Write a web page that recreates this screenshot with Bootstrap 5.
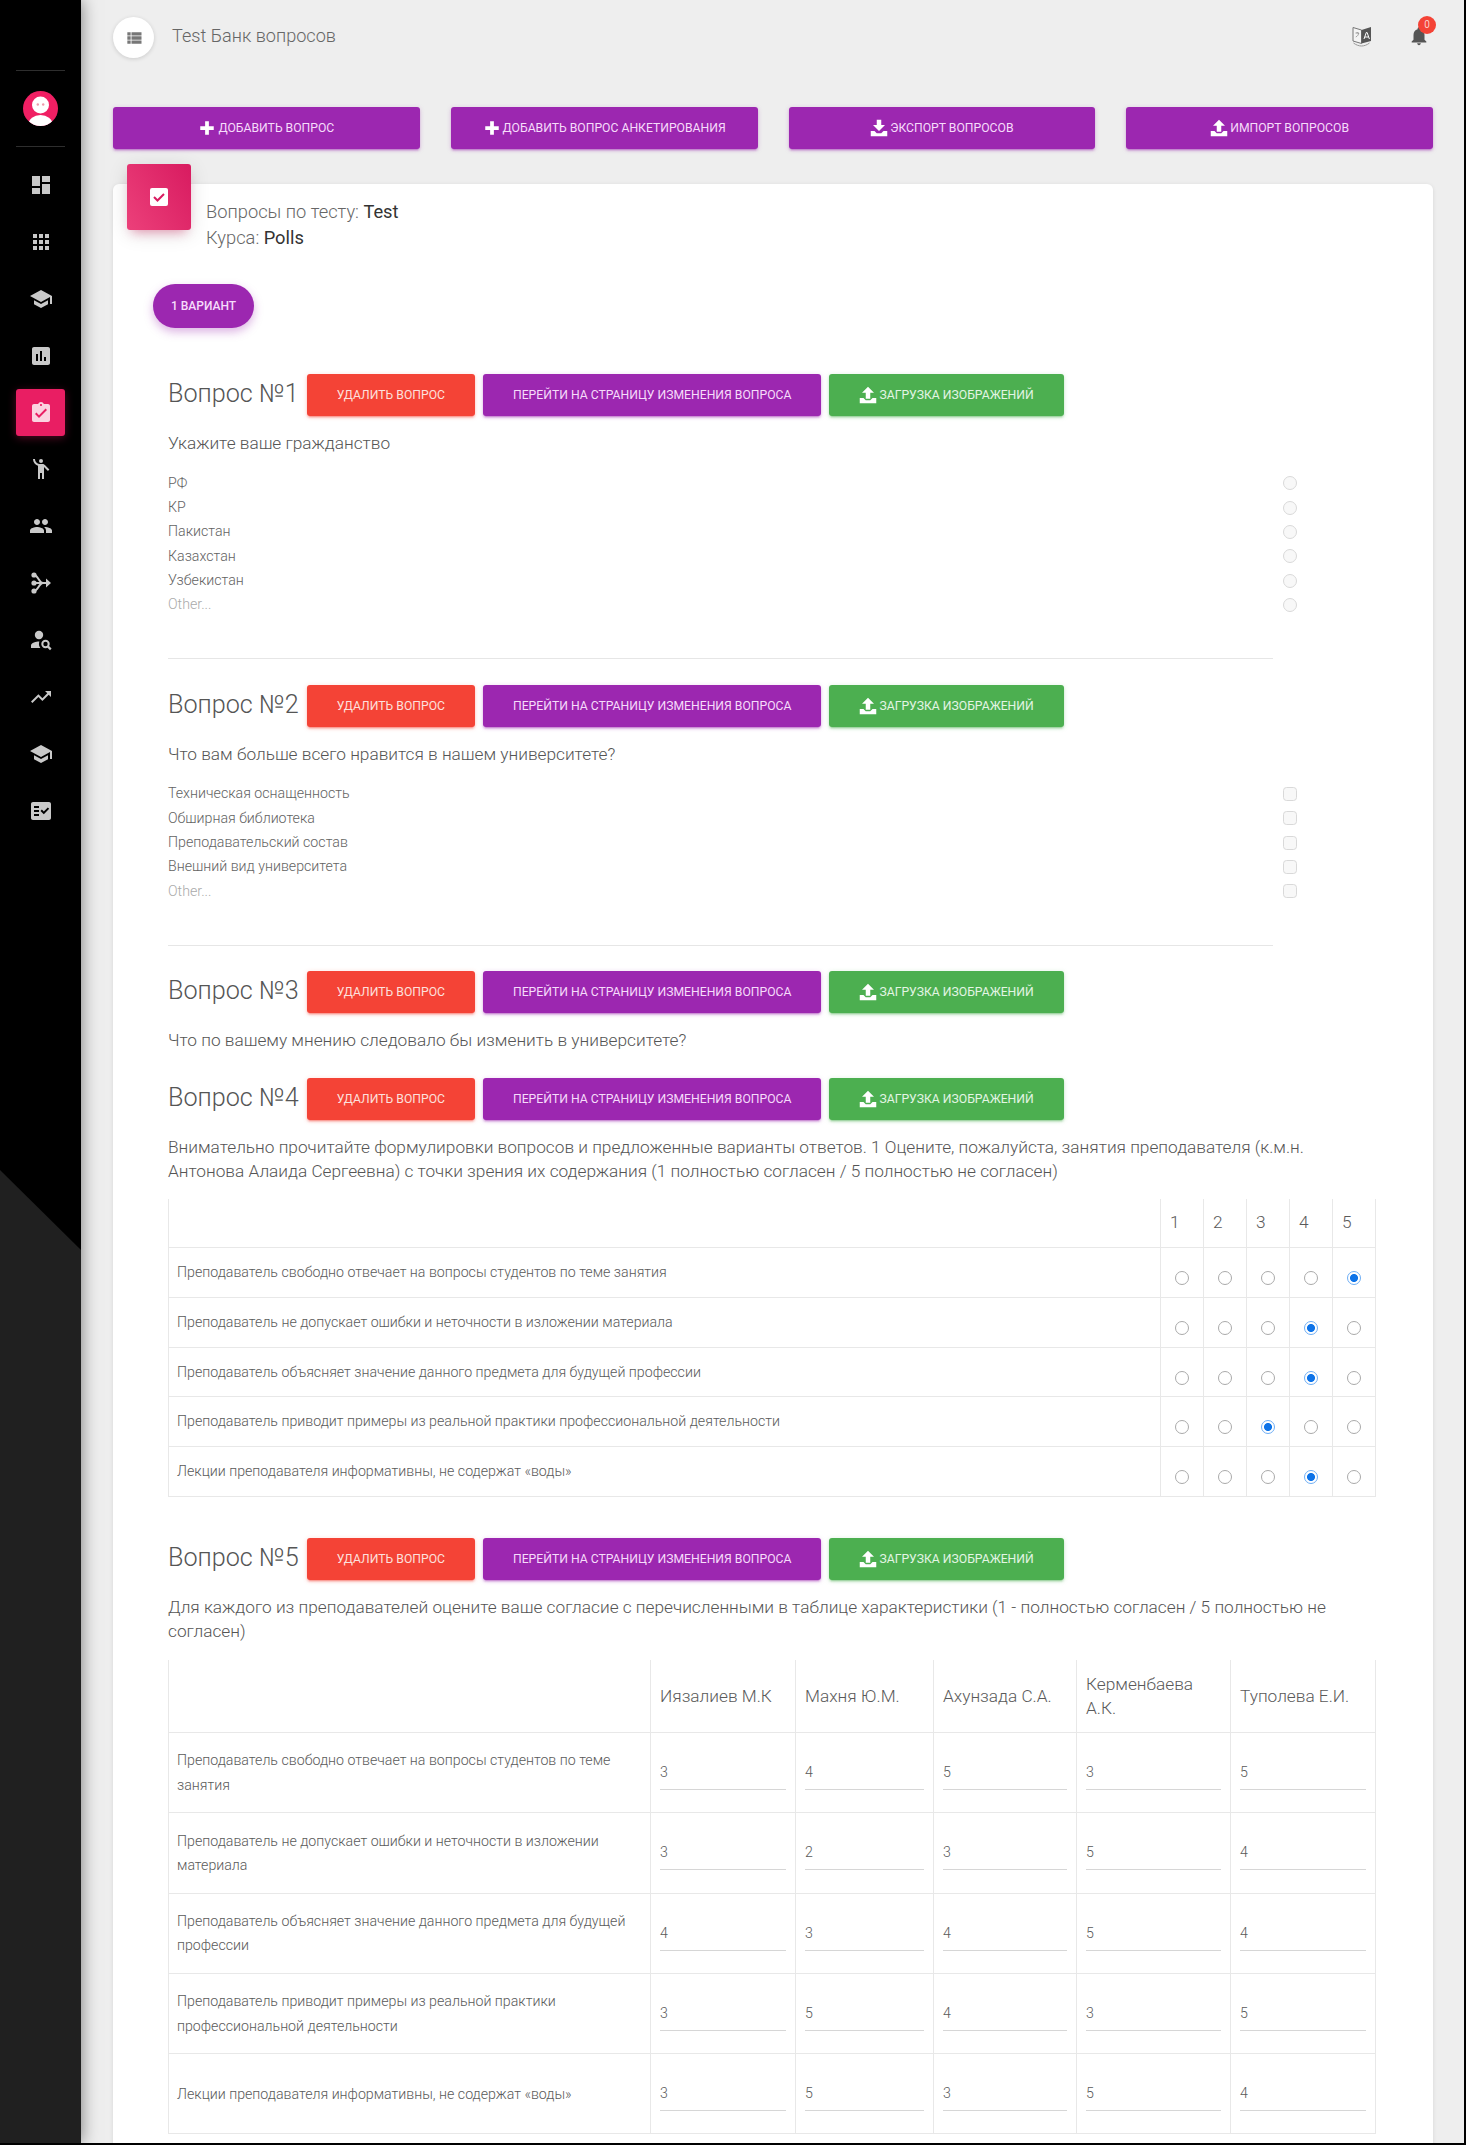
<!DOCTYPE html>
<html lang="ru">
<head>
  <meta charset="UTF-8" />
  <meta name="viewport" content="width=device-width, initial-scale=1.0">
  <title>Test Банк вопросов</title>
  <link href="https://cdn.jsdelivr.net/npm/bootstrap@5.3.3/dist/css/bootstrap.min.css" rel="stylesheet" />
  <style>
    html, body { height: 2145px; overflow: hidden; }
    body { background: #000; font-family: Roboto, "Liberation Sans", sans-serif; font-weight: 300; color: #555; }
    .app-shell { height: 2143px; margin-right: 2px; }

    /* sidebar */
    .side-bar { width: 81px; background: #000; padding-top: 70px; position: relative; z-index: 2; box-shadow: 0 0 16px rgba(0,0,0,.5); flex-shrink: 0; }
    .side-bar::after { content: ""; position: absolute; left: 0; right: 0; top: 1170px; bottom: 0; background: #202020; clip-path: polygon(0 0, 100% 80px, 100% 100%, 0 100%); }
    .side-rule { height: 1px; background: #2e2e2e; margin: 0 16px; }
    .side-user { height: 75px; }
    .side-menu { margin-top: 14.5px; gap: 9.9px; padding: 0 16px; }
    .side-link { height: 47px; color: #c9c9c9; border-radius: 3px; }
    .side-link svg { width: 24px; height: 24px; fill: currentColor; }
    .side-link.is-active { background: #e91e63; color: #fbd3e0; box-shadow: 0 2px 8px rgba(233,30,99,.35); }

    /* main */
    .main-area { background: #eee; padding: 17px 31px 0 32px; overflow: hidden; min-width: 0; }
    .menu-round { width: 41px; height: 41px; background: #fff; box-shadow: 0 1px 4px rgba(0,0,0,.15); color: #777; }
    .menu-round svg { width: 20px; height: 20px; fill: currentColor; }
    .page-name { font-size: 18.1px; margin: 0 0 3px 18px; color: #666; }
    .top-icon { fill: #555; }
    .lang-icon { width: 20px; height: 22px; margin: 0 36px 4px auto; }
    .bell-wrap { margin: 0 3px 4px 0; width: 22px; height: 22px; }
    .bell-wrap svg { display: block; width: 22px; height: 22px; }
    .bell-count { position: absolute; top: -8.7px; right: -6px; width: 18px; height: 18px; border-radius: 50%; background: #f44336; color: #fbd0cc; font-size: 10px; font-weight: 400; line-height: 18px; text-align: center; }

    .action-row { margin-top: 49px; gap: 31px; }
    .act-btn { font-family: Roboto, "Liberation Sans", sans-serif; font-size: 12.2px; font-weight: 400; text-transform: uppercase; border: 0; border-radius: 3px; height: 42px; padding: 0 30px; display: inline-flex; align-items: center; justify-content: center; white-space: nowrap; color: #f6dcfb; }
    .act-btn svg { width: 18px; height: 18px; fill: #fff; margin-right: 2px; }
    .act-purple { background: #9c27b0; box-shadow: 0 2px 2px rgba(156,39,176,.24), 0 3px 1px -2px rgba(156,39,176,.3), 0 1px 5px rgba(156,39,176,.22); }
    .act-red { background: #f44336; color: #fde0dd; box-shadow: 0 2px 2px rgba(244,67,54,.24), 0 3px 1px -2px rgba(244,67,54,.3), 0 1px 5px rgba(244,67,54,.22); }
    .act-green { background: #4caf50; color: #e3f5e4; box-shadow: 0 2px 2px rgba(76,175,80,.24), 0 3px 1px -2px rgba(76,175,80,.3), 0 1px 5px rgba(76,175,80,.22); }
    .act-wide { flex: 1 1 0; }

    /* card */
    .test-panel { margin-top: 35px; background: #fff; border-radius: 6px; box-shadow: 0 1px 4px rgba(0,0,0,.1); padding-bottom: 60px; }
    .panel-mark { width: 64px; height: 66px; margin: -20px 15px 0 14px; border-radius: 3px; background: linear-gradient(60deg, #ec407a, #d81b60); box-shadow: 0 4px 20px rgba(0,0,0,.12), 0 7px 10px -5px rgba(233,30,99,.4); }
    .panel-mark svg { width: 20px; height: 20px; }
    .panel-info { margin-top: 15px; font-size: 18.3px; line-height: 25.5px; color: #666; }
    .panel-info b { font-weight: 400; color: #333; }
    .variant-pill { margin: 34px 0 0 40px; width: 101px; height: 44px; padding: 0; border: 0; border-radius: 22px; background: #9c27b0; color: #f6dcfb; font-size: 12px; font-weight: 500; text-transform: uppercase; box-shadow: 0 4px 10px rgba(156,39,176,.35); }

    .question-list { padding: 46px 57px 0 55px; }
    .q-head { height: 42px; gap: 8px; }
    .q-title { font-size: 25.2px; font-weight: 300; color: #555; margin: 0 0 2px; line-height: 40px; }
    .q-text { font-size: 17.25px; line-height: 24.2px; margin-top: 15px; color: #555; }
    .opt-list { width: 1129px; margin-top: 16px; }
    .opt-line { height: 24.3px; font-size: 14.2px; color: #636363; }
    .opt-other { color: #aaa; }
    .opt-box, .opt-box:disabled { width: 14px; height: 14px; margin: 0; background-color: #f8f8f8; border: 1px solid #d9d9d9; opacity: 1; }
    .q-divider { width: 1105px; height: 1px; background: #e6e6e6; margin: 41.5px 0 25.2px; }
    .gap-q3 { margin-top: 26px; }
    .gap-q5 { margin-top: 41.5px; }

    /* tables */
    .grid-table { table-layout: fixed; margin: 15px 0 0; width: 100%; border-collapse: collapse; }
    .grid-table th, .grid-table td { border: 1px solid #e8e8e8; padding: 0; box-shadow: none; font-weight: 300; color: #5a5a5a; }
    .grid-table tr:first-child th { border-top: 0; }
    .scale-table th { height: 49px; font-size: 17.25px; padding-left: 9px; vertical-align: middle; }
    .scale-table td { height: 49.7px; vertical-align: top; font-size: 14.2px; }
    .scale-table .row-label { padding: 12px 8px 0; line-height: 24px; }
    .scale-table .radio-cell { padding-top: 23px; }
    .w-scale { width: 43px; }
    .scale-radio { appearance: none; display: block; width: 14px; height: 14px; margin: 0 auto; border: 1.5px solid #aaa; border-radius: 50%; background: #fff; }
    .scale-radio:checked { border-color: #6eaef5; background: radial-gradient(circle, #0d73e8 0 3.6px, #fff 4.4px); }
    .score-table { margin-top: 16px; }
    .score-table th { height: 73px; font-size: 17.25px; line-height: 24px; padding: 0 9px; vertical-align: middle; }
    .score-table td { height: 80.3px; }
    .score-table .row-label { padding: 0 8px; font-size: 14.2px; line-height: 24.4px; vertical-align: middle; }
    .score-table .score-cell { padding: 27px 9px 0; vertical-align: top; }
    .score-value { font-size: 14.2px; line-height: 24px; height: 30px; border-bottom: 1px solid #d6d6d6; color: #5a5a5a; }
    .w-name-1 { width: 145px; }
    .w-name-2 { width: 138px; }
    .w-name-3 { width: 143px; }
    .w-name-4 { width: 154px; }
    .w-name-5 { width: 145px; }
  </style>
</head>
<body>
  <svg class="d-none">
    <symbol id="i-dashboard" viewBox="0 0 24 24"><path d="M3 13h8V3H3v10zm0 8h8v-6H3v6zm10 0h8V11h-8v10zm0-18v6h8V3h-8z"/></symbol>
    <symbol id="i-apps" viewBox="0 0 24 24"><path d="M4 8h4V4H4v4zm6 12h4v-4h-4v4zm-6 0h4v-4H4v4zm0-6h4v-4H4v4zm6 0h4v-4h-4v4zm6-10v4h4V4h-4zm-6 4h4V4h-4v4zm6 6h4v-4h-4v4zm0 6h4v-4h-4v4z"/></symbol>
    <symbol id="i-school" viewBox="0 0 24 24"><path d="M5 13.18v4L12 21l7-3.82v-4L12 17l-7-3.82zM12 3L1 9l11 6 9-4.91V17h2V9L12 3z"/></symbol>
    <symbol id="i-chart" viewBox="0 0 24 24"><path d="M19 3H5c-1.1 0-2 .9-2 2v14c0 1.1.9 2 2 2h14c1.1 0 2-.9 2-2V5c0-1.1-.9-2-2-2zM9 17H7v-7h2v7zm4 0h-2V7h2v10zm4 0h-2v-4h2v4z"/></symbol>
    <symbol id="i-assign" viewBox="0 0 24 24"><path d="M19 3h-4.18C14.4 1.84 13.3 1 12 1c-1.3 0-2.4.84-2.82 2H5c-1.1 0-2 .9-2 2v14c0 1.1.9 2 2 2h14c1.1 0 2-.9 2-2V5c0-1.1-.9-2-2-2zm-7 0c.55 0 1 .45 1 1s-.45 1-1 1-1-.45-1-1 .45-1 1-1z"/><path d="M10 17l-4-4 1.41-1.41L10 14.17l6.59-6.59L18 9l-8 8z" fill="#e91e63"/></symbol>
    <symbol id="i-person-up" viewBox="0 0 24 24"><circle cx="12" cy="4" r="2"/><path d="M15.89 8.11C15.5 7.72 14.83 7 13.53 7h-2.54C8.24 6.99 6 4.75 6 2H4c0 3.16 2.11 5.84 5 6.71V22h2v-6h2v6h2V10.05L18.95 14l1.41-1.41-4.47-4.48z"/></symbol>
    <symbol id="i-people" viewBox="0 0 24 24"><path d="M16 11c1.66 0 2.99-1.34 2.99-3S17.66 5 16 5c-1.66 0-3 1.34-3 3s1.34 3 3 3zm-8 0c1.66 0 2.99-1.34 2.99-3S9.66 5 8 5C6.34 5 5 6.34 5 8s1.34 3 3 3zm0 2c-2.33 0-7 1.17-7 3.5V19h14v-2.5c0-2.33-4.67-3.5-7-3.5zm8 0c-.29 0-.62.02-.97.05 1.16.84 1.97 1.97 1.97 3.45V19h6v-2.5c0-2.33-4.67-3.5-7-3.5z"/></symbol>
    <symbol id="i-merge" viewBox="0 0 24 24"><circle cx="5" cy="4" r="2.6"/><circle cx="5" cy="12" r="2.6"/><circle cx="5" cy="20" r="2.6"/><path d="M5 12h13M5 4c4 0 5 8 9 8M5 20c4 0 5-8 9-8" fill="none" stroke="currentColor" stroke-width="2"/><path d="M17 7.5l5 4.5-5 4.5z"/></symbol>
    <symbol id="i-person-search" viewBox="0 0 24 24"><circle cx="10" cy="7" r="4.2"/><path d="M10.4 13.6C7.6 13.5 2 14.9 2 17.6V20h9.4c-2.4-2.8-1.1-6-1-6.4z"/><circle cx="16.5" cy="16" r="3.2" fill="none" stroke="currentColor" stroke-width="2"/><path d="M18.8 18.4l3 3" stroke="currentColor" stroke-width="2.2"/></symbol>
    <symbol id="i-trend" viewBox="0 0 24 24"><path d="M16 6l2.29 2.29-4.88 4.88-4-4L2 16.59 3.41 18l6-6 4 4 6.3-6.29L22 12V6z"/></symbol>
    <symbol id="i-fact" viewBox="0 0 24 24"><path fill-rule="evenodd" d="M20 3H4c-1.1 0-2 .9-2 2v14c0 1.1.9 2 2 2h16c1.1 0 2-.9 2-2V5c0-1.1-.9-2-2-2zM10 17H5v-2h5v2zm0-4H5v-2h5v2zm0-4H5V7h5v2zm4.8 6.2l-3.3-3.3 1.4-1.4 1.9 1.9 4-4 1.4 1.4-5.4 5.4z"/></symbol>
    <symbol id="i-list" viewBox="0 0 24 24"><path d="M4 14h4v-4H4v4zm0 5h4v-4H4v4zM4 9h4V5H4v4zm5 5h12v-4H9v4zm0 5h12v-4H9v4zM9 5v4h12V5H9z"/></symbol>
    <symbol id="i-plus" viewBox="0 0 24 24"><path d="M9.5 3h5v6.5H21v5h-6.5V21h-5v-6.5H3v-5h6.5z"/></symbol>
    <symbol id="i-down" viewBox="0 0 24 24"><path d="M9 1h6v7h5l-8 8-8-8h5z"/><path d="M1 16h5l3 3h6l3-3h5v7H1z"/></symbol>
    <symbol id="i-up" viewBox="0 0 24 24"><path d="M12 1l8 8h-5v8H9V9H4z"/><path d="M1 16h5l3 3h6l3-3h5v7H1z"/></symbol>
  </svg>

  <div class="app-shell d-flex">
    <aside class="side-bar d-flex flex-column">
      <div class="side-rule"></div>
      <div class="side-user d-flex align-items-center justify-content-center">
        <svg width="35" height="35" viewBox="0 0 35 35">
          <circle cx="17.5" cy="17.5" r="17.5" fill="#f01f63"/>
          <clipPath id="avatar-clip"><circle cx="17.5" cy="17.5" r="17.5"/></clipPath>
          <g clip-path="url(#avatar-clip)">
            <ellipse cx="17.5" cy="33" rx="12" ry="9" fill="#fff"/>
            <circle cx="17.5" cy="14" r="8.5" fill="#fff"/>
            <circle cx="14.8" cy="13.5" r="1.2" fill="#e9a"/>
            <circle cx="20.2" cy="13.5" r="1.2" fill="#e9a"/>
          </g>
        </svg>
      </div>
      <div class="side-rule"></div>
      <nav class="side-menu nav flex-column">
        <a class="side-link d-flex align-items-center justify-content-center" href="#"><svg><use href="#i-dashboard"/></svg></a>
        <a class="side-link d-flex align-items-center justify-content-center" href="#"><svg><use href="#i-apps"/></svg></a>
        <a class="side-link d-flex align-items-center justify-content-center" href="#"><svg><use href="#i-school"/></svg></a>
        <a class="side-link d-flex align-items-center justify-content-center" href="#"><svg><use href="#i-chart"/></svg></a>
        <a class="side-link is-active d-flex align-items-center justify-content-center" href="#"><svg><use href="#i-assign"/></svg></a>
        <a class="side-link d-flex align-items-center justify-content-center" href="#"><svg><use href="#i-person-up"/></svg></a>
        <a class="side-link d-flex align-items-center justify-content-center" href="#"><svg><use href="#i-people"/></svg></a>
        <a class="side-link d-flex align-items-center justify-content-center" href="#"><svg><use href="#i-merge"/></svg></a>
        <a class="side-link d-flex align-items-center justify-content-center" href="#"><svg><use href="#i-person-search"/></svg></a>
        <a class="side-link d-flex align-items-center justify-content-center" href="#"><svg><use href="#i-trend"/></svg></a>
        <a class="side-link d-flex align-items-center justify-content-center" href="#"><svg><use href="#i-school"/></svg></a>
        <a class="side-link d-flex align-items-center justify-content-center" href="#"><svg><use href="#i-fact"/></svg></a>
      </nav>
    </aside>

    <main class="main-area flex-grow-1">
      <header class="d-flex align-items-center">
        <div class="menu-round rounded-circle d-flex align-items-center justify-content-center"><svg><use href="#i-list"/></svg></div>
        <div class="page-name">Test Банк вопросов</div>
        <svg class="lang-icon" viewBox="0 0 20 22">
          <path d="M1 2.5L9.5 5v13.5L1 16z" fill="#f4f4f4" stroke="#777" stroke-width="1"/>
          <path d="M3.5 8h3.5M5.2 7v1.2M3.8 12c1.6-.8 2.6-2 3-4" fill="none" stroke="#888" stroke-width=".8"/>
          <path d="M9.5 5L19 2v14l-9.5 2.5z" fill="#555"/>
          <path d="M12 14l2.3-6.5h.8L17.4 14M12.8 12h3.8" fill="none" stroke="#fff" stroke-width="1"/>
          <path d="M1.5 18c2.5 2 5.500 3 8 3s5.500-1 8-3" fill="none" stroke="#999" stroke-width="1"/>
        </svg>
        <div class="bell-wrap position-relative">
          <svg class="top-icon" viewBox="0 0 24 24"><path d="M12 22c1.1 0 2-.9 2-2h-4c0 1.1.89 2 2 2zm6-6v-5c0-3.07-1.64-5.64-4.5-6.32V4c0-.83-.67-1.5-1.5-1.5s-1.5.67-1.5 1.5v.68C7.63 5.36 6 7.92 6 11v5l-2 2v1h16v-1l-2-2z"/></svg>
          <span class="bell-count">0</span>
        </div>
      </header>

      <div class="action-row d-flex">
        <button class="btn act-btn act-purple act-wide"><svg><use href="#i-plus"/></svg>Добавить вопрос</button>
        <button class="btn act-btn act-purple act-wide"><svg><use href="#i-plus"/></svg>Добавить вопрос анкетирования</button>
        <button class="btn act-btn act-purple act-wide"><svg><use href="#i-down"/></svg>Экспорт вопросов</button>
        <button class="btn act-btn act-purple act-wide"><svg><use href="#i-up"/></svg>Импорт вопросов</button>
      </div>

      <section class="test-panel">
        <div class="d-flex align-items-start">
          <div class="panel-mark d-flex align-items-center justify-content-center">
            <svg viewBox="0 0 20 20"><rect x="1" y="1" width="18" height="18" rx="2" fill="#fff"/><path d="M5 10l3.5 3.5L15 7" fill="none" stroke="#d81b60" stroke-width="2"/></svg>
          </div>
          <div class="panel-info">Вопросы по тесту: <b>Test</b><br>Курса: <b>Polls</b></div>
        </div>
        <button class="btn variant-pill d-block">1 вариант</button>

        <div class="question-list">
          <div class="q-head d-flex align-items-center">
            <h4 class="q-title">Вопрос №1</h4>
            <button class="btn act-btn act-red">Удалить вопрос</button>
            <button class="btn act-btn act-purple">Перейти на страницу изменения вопроса</button>
            <button class="btn act-btn act-green"><svg><use href="#i-up"/></svg>Загрузка изображений</button>
          </div>
          <p class="q-text mb-0">Укажите ваше гражданство</p>
          <div class="opt-list">
            <div class="opt-line d-flex align-items-center justify-content-between">РФ <input class="form-check-input opt-box" type="radio" disabled></div>
            <div class="opt-line d-flex align-items-center justify-content-between">КР <input class="form-check-input opt-box" type="radio" disabled></div>
            <div class="opt-line d-flex align-items-center justify-content-between">Пакистан <input class="form-check-input opt-box" type="radio" disabled></div>
            <div class="opt-line d-flex align-items-center justify-content-between">Казахстан <input class="form-check-input opt-box" type="radio" disabled></div>
            <div class="opt-line d-flex align-items-center justify-content-between">Узбекистан <input class="form-check-input opt-box" type="radio" disabled></div>
            <div class="opt-line opt-other d-flex align-items-center justify-content-between">Other... <input class="form-check-input opt-box" type="radio" disabled></div>
          </div>
          <div class="q-divider"></div>

          <div class="q-head d-flex align-items-center">
            <h4 class="q-title">Вопрос №2</h4>
            <button class="btn act-btn act-red">Удалить вопрос</button>
            <button class="btn act-btn act-purple">Перейти на страницу изменения вопроса</button>
            <button class="btn act-btn act-green"><svg><use href="#i-up"/></svg>Загрузка изображений</button>
          </div>
          <p class="q-text mb-0">Что вам больше всего нравится в нашем университете?</p>
          <div class="opt-list">
            <div class="opt-line d-flex align-items-center justify-content-between">Техническая оснащенность <input class="form-check-input opt-box" type="checkbox" disabled></div>
            <div class="opt-line d-flex align-items-center justify-content-between">Обширная библиотека <input class="form-check-input opt-box" type="checkbox" disabled></div>
            <div class="opt-line d-flex align-items-center justify-content-between">Преподавательский состав <input class="form-check-input opt-box" type="checkbox" disabled></div>
            <div class="opt-line d-flex align-items-center justify-content-between">Внешний вид университета <input class="form-check-input opt-box" type="checkbox" disabled></div>
            <div class="opt-line opt-other d-flex align-items-center justify-content-between">Other... <input class="form-check-input opt-box" type="checkbox" disabled></div>
          </div>
          <div class="q-divider"></div>

          <div class="q-head d-flex align-items-center">
            <h4 class="q-title">Вопрос №3</h4>
            <button class="btn act-btn act-red">Удалить вопрос</button>
            <button class="btn act-btn act-purple">Перейти на страницу изменения вопроса</button>
            <button class="btn act-btn act-green"><svg><use href="#i-up"/></svg>Загрузка изображений</button>
          </div>
          <p class="q-text mb-0">Что по вашему мнению следовало бы изменить в университете?</p>

          <div class="q-head gap-q3 d-flex align-items-center">
            <h4 class="q-title">Вопрос №4</h4>
            <button class="btn act-btn act-red">Удалить вопрос</button>
            <button class="btn act-btn act-purple">Перейти на страницу изменения вопроса</button>
            <button class="btn act-btn act-green"><svg><use href="#i-up"/></svg>Загрузка изображений</button>
          </div>
          <p class="q-text mb-0">Внимательно прочитайте формулировки вопросов и предложенные варианты ответов. 1 Оцените, пожалуйста, занятия преподавателя (к.м.н. Антонова Алаида Сергеевна) с точки зрения их содержания (1 полностью согласен / 5 полностью не согласен)</p>
          <table class="table grid-table scale-table">
            <thead>
              <tr><th></th><th class="w-scale">1</th><th class="w-scale">2</th><th class="w-scale">3</th><th class="w-scale">4</th><th class="w-scale">5</th></tr>
            </thead>
            <tbody>
              <tr>
                <td class="row-label">Преподаватель свободно отвечает на вопросы студентов по теме занятия</td>
                <td class="radio-cell"><input class="scale-radio" type="radio" name="r1"></td>
                <td class="radio-cell"><input class="scale-radio" type="radio" name="r1"></td>
                <td class="radio-cell"><input class="scale-radio" type="radio" name="r1"></td>
                <td class="radio-cell"><input class="scale-radio" type="radio" name="r1"></td>
                <td class="radio-cell"><input class="scale-radio" type="radio" name="r1" checked></td>
              </tr>
              <tr>
                <td class="row-label">Преподаватель не допускает ошибки и неточности в изложении материала</td>
                <td class="radio-cell"><input class="scale-radio" type="radio" name="r2"></td>
                <td class="radio-cell"><input class="scale-radio" type="radio" name="r2"></td>
                <td class="radio-cell"><input class="scale-radio" type="radio" name="r2"></td>
                <td class="radio-cell"><input class="scale-radio" type="radio" name="r2" checked></td>
                <td class="radio-cell"><input class="scale-radio" type="radio" name="r2"></td>
              </tr>
              <tr>
                <td class="row-label">Преподаватель объясняет значение данного предмета для будущей профессии</td>
                <td class="radio-cell"><input class="scale-radio" type="radio" name="r3"></td>
                <td class="radio-cell"><input class="scale-radio" type="radio" name="r3"></td>
                <td class="radio-cell"><input class="scale-radio" type="radio" name="r3"></td>
                <td class="radio-cell"><input class="scale-radio" type="radio" name="r3" checked></td>
                <td class="radio-cell"><input class="scale-radio" type="radio" name="r3"></td>
              </tr>
              <tr>
                <td class="row-label">Преподаватель приводит примеры из реальной практики профессиональной деятельности</td>
                <td class="radio-cell"><input class="scale-radio" type="radio" name="r4"></td>
                <td class="radio-cell"><input class="scale-radio" type="radio" name="r4"></td>
                <td class="radio-cell"><input class="scale-radio" type="radio" name="r4" checked></td>
                <td class="radio-cell"><input class="scale-radio" type="radio" name="r4"></td>
                <td class="radio-cell"><input class="scale-radio" type="radio" name="r4"></td>
              </tr>
              <tr>
                <td class="row-label">Лекции преподавателя информативны, не содержат «воды»</td>
                <td class="radio-cell"><input class="scale-radio" type="radio" name="r5"></td>
                <td class="radio-cell"><input class="scale-radio" type="radio" name="r5"></td>
                <td class="radio-cell"><input class="scale-radio" type="radio" name="r5"></td>
                <td class="radio-cell"><input class="scale-radio" type="radio" name="r5" checked></td>
                <td class="radio-cell"><input class="scale-radio" type="radio" name="r5"></td>
              </tr>
            </tbody>
          </table>

          <div class="q-head gap-q5 d-flex align-items-center">
            <h4 class="q-title">Вопрос №5</h4>
            <button class="btn act-btn act-red">Удалить вопрос</button>
            <button class="btn act-btn act-purple">Перейти на страницу изменения вопроса</button>
            <button class="btn act-btn act-green"><svg><use href="#i-up"/></svg>Загрузка изображений</button>
          </div>
          <p class="q-text mb-0">Для каждого из преподавателей оцените ваше согласие с перечисленными в таблице характеристики (1 - полностью согласен / 5 полностью не согласен)</p>
          <table class="table grid-table score-table">
            <thead>
              <tr>
                <th></th>
                <th class="w-name-1">Иязалиев М.К</th>
                <th class="w-name-2">Махня Ю.М.</th>
                <th class="w-name-3">Ахунзада С.А.</th>
                <th class="w-name-4">Керменбаева А.К.</th>
                <th class="w-name-5">Туполева Е.И.</th>
              </tr>
            </thead>
            <tbody>
              <tr>
                <td class="row-label">Преподаватель свободно отвечает на вопросы студентов по теме занятия</td>
                <td class="score-cell"><div class="score-value">3</div></td>
                <td class="score-cell"><div class="score-value">4</div></td>
                <td class="score-cell"><div class="score-value">5</div></td>
                <td class="score-cell"><div class="score-value">3</div></td>
                <td class="score-cell"><div class="score-value">5</div></td>
              </tr>
              <tr>
                <td class="row-label">Преподаватель не допускает ошибки и неточности в изложении материала</td>
                <td class="score-cell"><div class="score-value">3</div></td>
                <td class="score-cell"><div class="score-value">2</div></td>
                <td class="score-cell"><div class="score-value">3</div></td>
                <td class="score-cell"><div class="score-value">5</div></td>
                <td class="score-cell"><div class="score-value">4</div></td>
              </tr>
              <tr>
                <td class="row-label">Преподаватель объясняет значение данного предмета для будущей профессии</td>
                <td class="score-cell"><div class="score-value">4</div></td>
                <td class="score-cell"><div class="score-value">3</div></td>
                <td class="score-cell"><div class="score-value">4</div></td>
                <td class="score-cell"><div class="score-value">5</div></td>
                <td class="score-cell"><div class="score-value">4</div></td>
              </tr>
              <tr>
                <td class="row-label">Преподаватель приводит примеры из реальной практики профессиональной деятельности</td>
                <td class="score-cell"><div class="score-value">3</div></td>
                <td class="score-cell"><div class="score-value">5</div></td>
                <td class="score-cell"><div class="score-value">4</div></td>
                <td class="score-cell"><div class="score-value">3</div></td>
                <td class="score-cell"><div class="score-value">5</div></td>
              </tr>
              <tr>
                <td class="row-label">Лекции преподавателя информативны, не содержат «воды»</td>
                <td class="score-cell"><div class="score-value">3</div></td>
                <td class="score-cell"><div class="score-value">5</div></td>
                <td class="score-cell"><div class="score-value">3</div></td>
                <td class="score-cell"><div class="score-value">5</div></td>
                <td class="score-cell"><div class="score-value">4</div></td>
              </tr>
            </tbody>
          </table>
        </div>
      </section>
    </main>
  </div>
  <script src="https://cdn.jsdelivr.net/npm/bootstrap@5.3.3/dist/js/bootstrap.bundle.min.js"></script>
</body>
</html>
